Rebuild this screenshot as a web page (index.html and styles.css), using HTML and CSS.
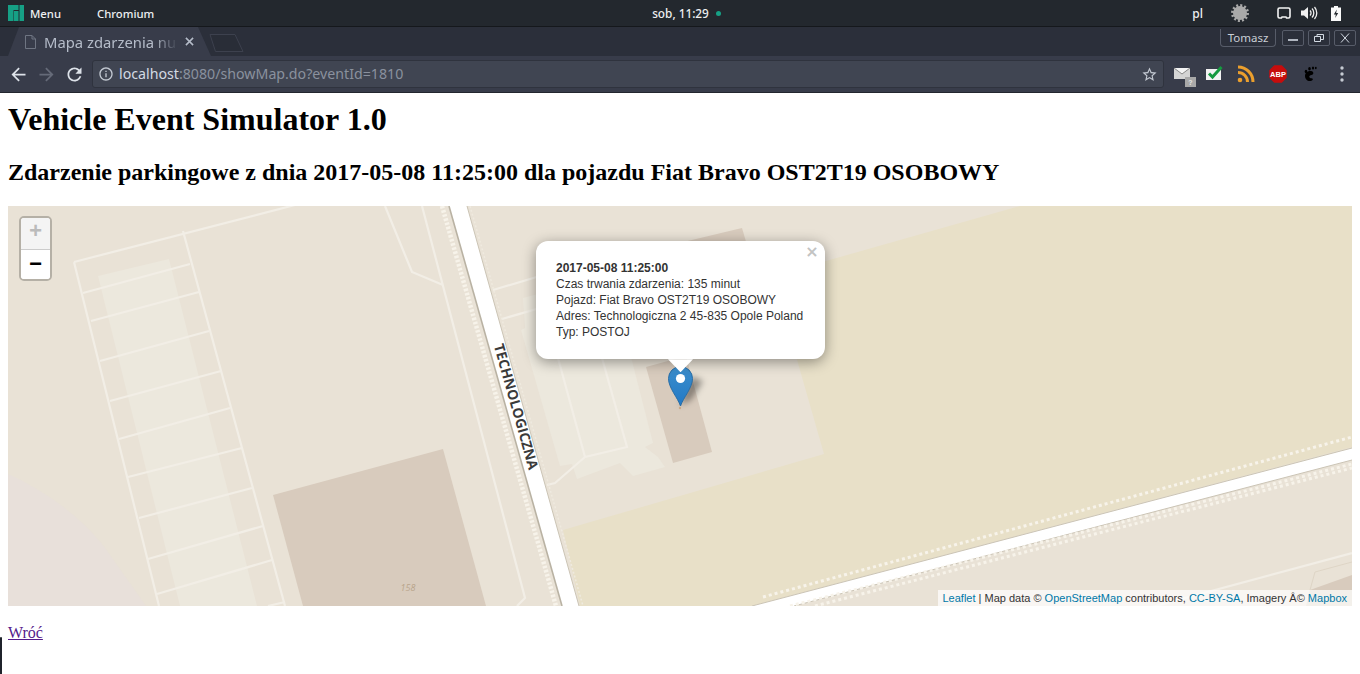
FILE: index.html
```html
<!DOCTYPE html>
<html lang="pl">
<head>
<meta charset="utf-8">
<title>Vehicle Event Simulator</title>
<link rel="stylesheet" href="styles.css">
</head>
<body>
<header class="desktop-bar">
  <div class="bar-left">
    <svg class="distro-logo" viewBox="0 0 16 16"><path d="M0 0h10.500v5H5.500v11H0z"/><rect x="6" y="6" width="4.500" height="10"/><rect x="11.500" y="0" width="4.500" height="16"/></svg>
    <span class="bar-menu">Menu</span>
    <span class="bar-app">Chromium</span>
  </div>
  <div class="bar-clock"><span>sob, 11:29</span><i class="clock-dot"></i></div>
  <div class="bar-right">
    <span class="bar-lang">pl</span>
    <svg class="tray-gear" viewBox="0 0 20 20"><circle class="gear-body" cx="10" cy="10" r="7"/><circle class="gear-teeth" cx="10" cy="10" r="7.500"/></svg>
    <svg class="tray-screen" viewBox="0 0 14 13"><path d="M2.500 1h9A1.500 1.500 0 0 1 13 2.500v7A1.500 1.500 0 0 1 11.500 11H9.500L9 10H5l-.5 1h-2A1.500 1.500 0 0 1 1 9.500v-7A1.500 1.500 0 0 1 2.500 1z"/></svg>
    <svg class="tray-volume" viewBox="0 0 17 14"><path class="vol-cone" d="M0 4.500h3L7 1v12L3 9.500H0z"/><path class="vol-wave" d="M9 4.500a3.500 3.500 0 0 1 0 5M11 2.500a6.500 6.500 0 0 1 0 9M13.500 1a9 9 0 0 1 0 12"/></svg>
    <svg class="tray-battery" viewBox="0 0 10 15"><path class="batt-body" d="M3 0h4v1.500h3V15H0V1.500h3z"/><path class="batt-bolt" d="M5.800 3.500L2.800 8.500h2L4.200 12l3-5h-2z"/></svg>
  </div>
</header>

<div class="tab-strip">
  <div class="tab">
    <svg class="tab-doc" viewBox="0 0 11 14"><path d="M.5.500h6.500l3.500 3.500v9.500H.5zM7 .5v3.500h3.500"/></svg>
    <span class="tab-title">Mapa zdarzenia nu</span>
    <svg class="tab-close" viewBox="0 0 10 10"><path d="M1 1l8 8M9 1l-8 8"/></svg>
  </div>
  <svg class="new-tab" viewBox="0 0 35 18"><path d="M1 .5h25l8 17H6.500z"/></svg>
  <div class="window-controls">
    <span class="profile">Tomasz</span>
    <span class="win-btn"><svg viewBox="0 0 12 10"><path class="win-bar" d="M1 7h10"/></svg></span>
    <span class="win-btn"><svg viewBox="0 0 12 10"><path d="M1.500 3.500h6v5h-6zM4 3.500V1.500h6.500v5H7.500"/></svg></span>
    <span class="win-btn"><svg viewBox="0 0 12 10"><path d="M2 .5l8 9M10 .5l-8 9"/></svg></span>
  </div>
</div>

<nav class="toolbar">
  <button class="nav-btn"><svg class="nav-icon" viewBox="0 0 24 24"><path d="M20 11H7.830l5.590-5.590L12 4l-8 8 8 8 1.410-1.410L7.830 13H20v-2z"/></svg></button>
  <button class="nav-btn nav-off"><svg class="nav-icon" viewBox="0 0 24 24"><path d="M12 4l-1.410 1.410L16.170 11H4v2h12.170l-5.580 5.590L12 20l8-8z"/></svg></button>
  <button class="nav-btn"><svg class="nav-icon" viewBox="0 0 24 24"><path d="M17.650 6.350C16.200 4.900 14.210 4 12 4c-4.420 0-7.990 3.580-7.990 8s3.570 8 7.990 8c3.730 0 6.840-2.550 7.730-6h-2.080c-.82 2.330-3.040 4-5.650 4-3.310 0-6-2.690-6-6s2.690-6 6-6c1.660 0 3.140.69 4.220 1.780L13 11h7V4l-2.350 2.350z"/></svg></button>
  <div class="omnibox">
    <svg class="omni-info" viewBox="0 0 24 24"><path d="M11 7h2v2h-2zm0 4h2v6h-2zm1-9C6.480 2 2 6.480 2 12s4.480 10 10 10 10-4.480 10-10S17.520 2 12 2zm0 18c-4.410 0-8-3.590-8-8s3.590-8 8-8 8 3.590 8 8-3.590 8-8 8z"/></svg>
    <span class="url"><span class="url-host">localhost</span>:8080/showMap.do?eventId=1810</span>
    <svg class="omni-star" viewBox="0 0 24 24"><path d="M22 9.240l-7.190-.62L12 2 9.190 8.630 2 9.240l5.460 4.730L5.820 21 12 17.270 18.180 21l-1.630-7.030L22 9.240zM12 15.400l-3.760 2.270 1-4.280-3.320-2.880 4.380-.38L12 6.100l1.710 4.040 4.380.38-3.320 2.880 1 4.280L12 15.400z"/></svg>
  </div>
  <div class="extensions">
    <span class="ext"><svg viewBox="0 0 24 24"><path class="mail-body" d="M4 6h16v11H4z"/><path class="mail-flap" d="M4 6l8 6 8-6"/><rect class="mail-badge" x="15" y="15" width="11" height="10"/><text class="mail-q" x="20.500" y="23">?</text></svg></span>
    <span class="ext"><svg viewBox="0 0 24 24"><path class="check-box" d="M4 7h15v11H4z"/><path class="check-mark" d="M7 11.500l3.500 3.500 9-10"/></svg></span>
    <span class="ext"><svg viewBox="0 0 24 24"><circle class="rss-dot" cx="6" cy="18" r="2.300"/><path class="rss-arc" d="M4 10.500a9.500 9.500 0 0 1 9.500 9.500M4 5a15 15 0 0 1 15 15"/></svg></span>
    <span class="ext"><svg viewBox="0 0 24 24"><path class="abp-sign" d="M8.500 4h7l4.500 4.500v7L15.500 20h-7L4 15.500v-7z"/><text class="abp-text" x="12" y="14.700">ABP</text></svg></span>
    <span class="ext"><svg viewBox="0 0 24 24"><path class="foot" d="M13 9c-3.500-.5-6 2-6 5 0 3 2.500 5.500 5.500 5 1.500-.2 2.500-1 2.300-2-.2-1-2-.5-3-1.300-1-.8-.5-2.200.7-2.500 1.300-.4 2.500-.3 2.800-1.700.2-1.300-.8-2.300-2.300-2.500z"/><ellipse class="foot" cx="8" cy="9.500" rx="1.300" ry="1.800"/><ellipse class="foot" cx="11.500" cy="6.800" rx="1.300" ry="1.800"/><ellipse class="foot" cx="15" cy="6" rx="1.100" ry="1.500"/><ellipse class="foot" cx="17.800" cy="6" rx=".9" ry="1.200"/></svg></span>
    <span class="ext"><svg viewBox="0 0 24 24"><circle class="dots" cx="12" cy="6" r="1.700"/><circle class="dots" cx="12" cy="12" r="1.700"/><circle class="dots" cx="12" cy="18" r="1.700"/></svg></span>
  </div>
</nav>

<main class="page">
  <h1>Vehicle Event Simulator 1.0</h1>
  <h2>Zdarzenie parkingowe z dnia 2017-05-08 11:25:00 dla pojazdu Fiat Bravo OST2T19 OSOBOWY</h2>
  <section class="map">
    <svg class="map-art" viewBox="8 206 1344 400">
      <defs><filter id="soft" x="-50%" y="-50%" width="200%" height="200%"><feGaussianBlur stdDeviation="3"/></filter></defs>
      <rect class="m-base" x="8" y="206" width="1344" height="400"/>
      <path class="m-pink" d="M8 474C40 488 80 515 105 548L146 606H8z"/>
      <path class="m-sand" d="M1020 206H1352V447L752 606H580L563 530L824 454L773 276z"/>
      <path class="m-light" d="M98 276L169 259L257 606H180z"/>
      <path class="m-light" d="M523 298L610 275L653 443L645 447L658 457L665 467L633 476L620 463L577 479L572 464L560 466L521 330L525 328z"/>
      <path class="m-building" d="M273 495L443 449L486 606H303z"/>
      <path class="m-building" d="M646 367L686 356L712 452L673 463z"/>
      <path class="m-building" d="M650 250L742 228L747 245L700 265z"/>
      <path class="m-building" d="M1352 575L1310 590L1306 606H1352z"/>
      <path class="m-faint" d="M1352 562L1315 572L1310 590"/>
      <g class="m-lines">
        <path d="M74 262L295 205M74 262L159 606M183 231L285 606"/>
        <path d="M83 293L190 264M91 321L199 292M100 361L209 331M110 401L221 371M119 439L230 408M128 477L242 448M139 518L252 488M148 559L263 526M157 594L272 560M268 606L285 602"/>
        <path d="M385 206L412 272L443 285M422 206L525 598L517 606"/>
        <path d="M493 290L540 276M502 319L540 308"/>
        <path d="M558 358L585 457L627 447L602 358M585 457L555 483L547 485"/>
        <path d="M1352 553L1030 640"/>
      </g>
      <path class="m-road" d="M449 206H467L579 606H562z"/>
      <path class="m-road" d="M752 606L1352 448V460L794 606z"/>
      <g class="m-edge">
        <path class="edge-strong" d="M449 206L562 606"/>
        <path d="M467 206L579 606"/>
        <path d="M752 606L1352 448M794 606L1352 460"/>
      </g>
      <g class="m-dots">
        <path class="dots-wide" d="M442 206L556 606"/>
        <path d="M763 597L1352 437M790 606L1352 464M815 606L1352 468"/>
      </g>
      <path class="m-dash" d="M470 206L583 606"/>
      <text class="m-street" transform="translate(515 407) rotate(74.300)">TECHNOLOGICZNA</text>
      <text class="m-house" x="408" y="591">158</text>
      <path class="m-shadow" d="M680 405L691 376L703 381L691 400z" filter="url(#soft)"/>
      <circle class="m-pindot" cx="680" cy="408" r="1.200"/>
    </svg>

    <div class="zoom">
      <span class="zoom-btn zoom-off">+</span>
      <span class="zoom-btn zoom-on">−</span>
    </div>

    <svg class="marker" viewBox="0 0 25 41">
      <defs><linearGradient id="pin" x1="0" y1="0" x2="0" y2="1"><stop offset="0" stop-color="#3c8ecb"/><stop offset="1" stop-color="#2279c6"/></linearGradient></defs>
      <path class="pin-body" d="M12.500 40C10 32 .5 22 .5 12.500A12 12 0 0 1 24.500 12.500C24.500 22 15 32 12.500 40z"/>
      <circle class="pin-hole" cx="12.500" cy="12.500" r="4.600"/>
    </svg>

    <div class="popup">
      <button class="popup-close">×</button>
      <div class="popup-text">
        <b>2017-05-08 11:25:00</b><br>
        Czas trwania zdarzenia: 135 minut<br>
        Pojazd: Fiat Bravo OST2T19 OSOBOWY<br>
        Adres: Technologiczna 2 45-835 Opole Poland<br>
        Typ: POSTOJ
      </div>
      <i class="popup-tip"></i>
    </div>

    <div class="attribution"><a href="#">Leaflet</a> | Map data © <a href="#">OpenStreetMap</a> contributors, <a href="#">CC-BY-SA</a>, Imagery Â© <a href="#">Mapbox</a></div>
  </section>
  <p class="back"><a href="#" class="back-link">Wróć</a></p>
</main>
<i class="window-edge"></i>
</body>
</html>
```

FILE: styles.css
```css
* { box-sizing: border-box; }
html, body { margin: 0; height: 674px; overflow: hidden; background: #fff; }
body { position: relative; font-family: "Liberation Serif", serif; }

/* desktop panel */
.desktop-bar {
  height: 27px;
  background: #23282e;
  border-bottom: 1px solid #15181c;
  display: grid;
  grid-template-columns: 1fr auto 1fr;
  align-items: center;
  font-family: "Noto Sans", sans-serif;
  font-size: 11.300px;
  font-weight: 500;
  color: #eef0f2;
}
.bar-left { display: flex; align-items: center; padding-left: 8px; }
.distro-logo { width: 16px; height: 16px; fill: #16a085; }
.bar-menu { margin-left: 6px; }
.bar-app { margin-left: 36px; }
.bar-clock { display: flex; align-items: center; gap: 7px; margin-left: 13px; font-size: 11.800px; }
.clock-dot { width: 5px; height: 5px; border-radius: 50%; background: #16a085; }
.bar-right { display: flex; align-items: center; justify-content: flex-end; }
.bar-lang { margin-right: 27px; font-size: 12px; }
.tray-gear { width: 20px; height: 20px; margin-right: 27px; }
.gear-body { fill: #a9a9a9; }
.gear-teeth { fill: none; stroke: #a9a9a9; stroke-width: 3; stroke-dasharray: 1.960 1.967; }
.tray-screen { width: 14px; height: 13px; margin-right: 10px; fill: none; stroke: #f4f4f4; stroke-width: 1.600; }
.tray-volume { width: 17px; height: 14px; margin-right: 13px; }
.vol-cone { fill: #f0f0f0; }
.vol-wave { fill: none; stroke: #f0f0f0; stroke-width: 1.300; }
.tray-battery { width: 10px; height: 15px; margin-right: 19px; }
.batt-body { fill: #fafafa; }
.batt-bolt { fill: #23282e; }

/* tab strip */
.tab-strip {
  height: 29px;
  background: #2b2f3a;
  display: flex;
  align-items: flex-start;
  padding-left: 8px;
  font-family: "Noto Sans", sans-serif;
}
.tab {
  width: 203px;
  height: 29px;
  flex: none;
  display: flex;
  align-items: center;
  padding-left: 17px;
  background: #383c4a;
  clip-path: polygon(0 100%, 11px 0, 190px 0, 203px 100%);
}
.tab-doc { width: 11px; height: 14px; fill: none; stroke: #6f7582; stroke-width: 1; }
.tab-title {
  margin-left: 8px;
  width: 134px;
  font-size: 14.800px;
  color: #b5bcc9;
  white-space: nowrap;
  overflow: hidden;
  -webkit-mask-image: linear-gradient(90deg, #000 82%, transparent 100%);
  mask-image: linear-gradient(90deg, #000 82%, transparent 100%);
}
.tab-close { width: 9px; height: 9px; margin-left: 7px; fill: none; stroke: #b5bcc9; stroke-width: 1.700; }
.new-tab { width: 35px; height: 18px; margin: 7px 0 0 -2px; fill: #292d37; stroke: #3d414e; }
.window-controls { margin-left: auto; display: flex; align-items: flex-start; padding-right: 4px; }
.profile {
  width: 56px;
  height: 18px;
  margin: 2px 2px 0 0;
  border: 1px solid #575c69;
  border-top: 0;
  border-radius: 0 0 4px 4px;
  text-align: center;
  font-size: 11.500px;
  line-height: 17px;
  color: #c9ced6;
}
.win-btn {
  width: 22px;
  height: 16px;
  margin: 3px 0 0 4px;
  border: 1px solid #575c69;
  border-radius: 2px;
  display: flex;
  align-items: center;
  justify-content: center;
}
.win-btn svg { width: 12px; height: 10px; fill: none; stroke: #d3dae3; stroke-width: 1; }
.win-btn .win-bar { stroke-width: 1.600; }

/* toolbar */
.toolbar {
  height: 37px;
  background: #383c4a;
  border-bottom: 1px solid #23262f;
  display: flex;
  align-items: center;
  padding-left: 4px;
  font-family: "Noto Sans", sans-serif;
}
.nav-btn {
  width: 28px;
  height: 28px;
  padding: 0;
  border: 0;
  background: none;
  display: flex;
  align-items: center;
  justify-content: center;
}
.nav-icon { width: 21px; height: 21px; fill: #dde2e9; }
.nav-off .nav-icon { fill: #656a78; }
.omnibox {
  width: 1072px;
  height: 28px;
  margin-left: 4px;
  background: #404552;
  border: 1px solid #2f333e;
  border-radius: 3px;
  display: flex;
  align-items: center;
  padding: 0 5px;
}
.omni-info { width: 16px; height: 16px; margin-left: 0; fill: #c3c9d2; }
.url { margin: 0 0 2px 5px; font-size: 14.200px; color: #8a919e; white-space: nowrap; }
.url-host { color: #d3dae3; }
.omni-star { width: 17px; height: 17px; margin-left: auto; fill: #c3c9d2; }
.extensions { display: flex; margin-left: 2px; }
.ext { width: 32px; height: 32px; display: flex; align-items: center; justify-content: center; }
.ext svg { width: 24px; height: 24px; overflow: visible; }
.mail-body { fill: #d4d4d4; }
.mail-flap { fill: #f4f4f4; stroke: #8a8a8a; stroke-width: 1; }
.mail-badge { fill: #a8a8a8; }
.mail-q { font: bold 7px "Liberation Sans", sans-serif; fill: #e6e6e6; text-anchor: middle; }
.check-box { fill: #f2f2f2; }
.check-mark { fill: none; stroke: #15993f; stroke-width: 3; }
.rss-dot { fill: #eb9f2d; }
.rss-arc { fill: none; stroke: #eb9f2d; stroke-width: 3; }
.abp-sign { fill: #c70d0d; stroke: #c70d0d; stroke-width: 1.500; stroke-linejoin: round; }
.abp-text { font: bold 7.500px "Liberation Sans", sans-serif; fill: #fff; text-anchor: middle; }
.foot { fill: #000; }
.dots { fill: #c6cbd3; }

/* page */
.page { padding: 8px; color: #000; }
h1 { margin: 0 0 21.440px; font-size: 32px; font-weight: bold; }
h2 { margin: 0 0 19.920px; font-size: 24px; font-weight: bold; }
.back { margin: 18px 0 16px; font-size: 16px; }
.back-link { color: #551a8b; }
.window-edge { position: absolute; left: 0; bottom: 0; width: 2px; height: 37px; background: #1f232b; border-radius: 2px 2px 0 0; }

/* map */
.map { position: relative; width: 1344px; height: 400px; overflow: hidden; font-family: "Liberation Sans", sans-serif; }
.map-art { display: block; width: 1344px; height: 400px; }
.m-base { fill: #e9e2d6; }
.m-pink { fill: #e8e0da; }
.m-sand { fill: #e8e0c8; }
.m-light { fill: #ece8dd; }
.m-building { fill: #d8cbbd; }
.m-faint { fill: none; stroke: #ded5c6; stroke-width: 1; }
.m-lines path { fill: none; stroke: #f2eee6; stroke-width: 2.200; }
.m-road { fill: #fff; }
.m-edge path { fill: none; stroke: #cbc4b5; stroke-width: 1; }
.m-edge .edge-strong { stroke: #b9b2a3; stroke-width: 1.600; }
.m-dots path { fill: none; stroke: #f7f3ea; stroke-width: 3; stroke-dasharray: 3 3; }
.m-dots .dots-wide { stroke-width: 4.500; stroke-dasharray: 2.500 1.800; }
.m-dash { fill: none; stroke: #efeadf; stroke-width: 1.500; stroke-dasharray: 2 2; }
.m-street { font: bold 14px "Open Sans", sans-serif; fill: #3a3a3a; text-anchor: middle; dominant-baseline: middle; }
.m-house { font: italic 9px "Open Sans", sans-serif; fill: #b8a58c; text-anchor: middle; }
.m-shadow { fill: #000; fill-opacity: .38; }
.m-pindot { fill: #c9a888; }

.zoom {
  position: absolute;
  left: 11px;
  top: 10px;
  width: 33px;
  border: 2px solid #b5b0a6;
  border-radius: 5px;
  overflow: hidden;
  display: flex;
  flex-direction: column;
  background: #fff;
}
.zoom-btn {
  text-align: center;
  font: bold 22px/30px "Liberation Mono", monospace;
  color: #000;
  background: #fff;
}
.zoom-on { height: 29px; line-height: 31px; }
.zoom-off { height: 32px; color: #bbb; background: #f4f4f4; border-bottom: 1px solid #ccc; }

.marker { position: absolute; left: 660px; top: 160px; width: 25px; height: 41px; }
.pin-body { fill: url(#pin); stroke: #2a6ea6; stroke-width: 1; }
.pin-hole { fill: #fff; }

.popup {
  position: absolute;
  left: 528px;
  top: 35px;
  width: 289px;
  height: 118px;
  padding: 19px 20px;
  background: #fff;
  border-radius: 12px;
  box-shadow: 0 3px 14px rgba(0, 0, 0, .4);
  font-size: 12px;
  line-height: 16px;
  color: #333;
}
.popup-text { white-space: nowrap; }
.popup-close {
  position: absolute;
  right: 6px;
  top: 4px;
  width: 14px;
  height: 14px;
  padding: 0;
  border: 0;
  background: none;
  font: bold 16px/14px Tahoma, "DejaVu Sans", sans-serif;
  color: #c3c3c3;
  text-align: center;
}
.popup-tip {
  position: absolute;
  left: 132px;
  top: 118px;
  width: 25px;
  height: 13px;
  background: #fff;
  clip-path: polygon(0 0, 100% 0, 50% 100%);
}

.attribution {
  position: absolute;
  right: 0;
  bottom: 0;
  height: 16px;
  padding: 0 5px;
  background: rgba(255, 255, 255, .7);
  font-size: 11px;
  line-height: 16px;
  color: #333;
  white-space: nowrap;
}
.attribution a { color: #0078a8; text-decoration: none; }
```
